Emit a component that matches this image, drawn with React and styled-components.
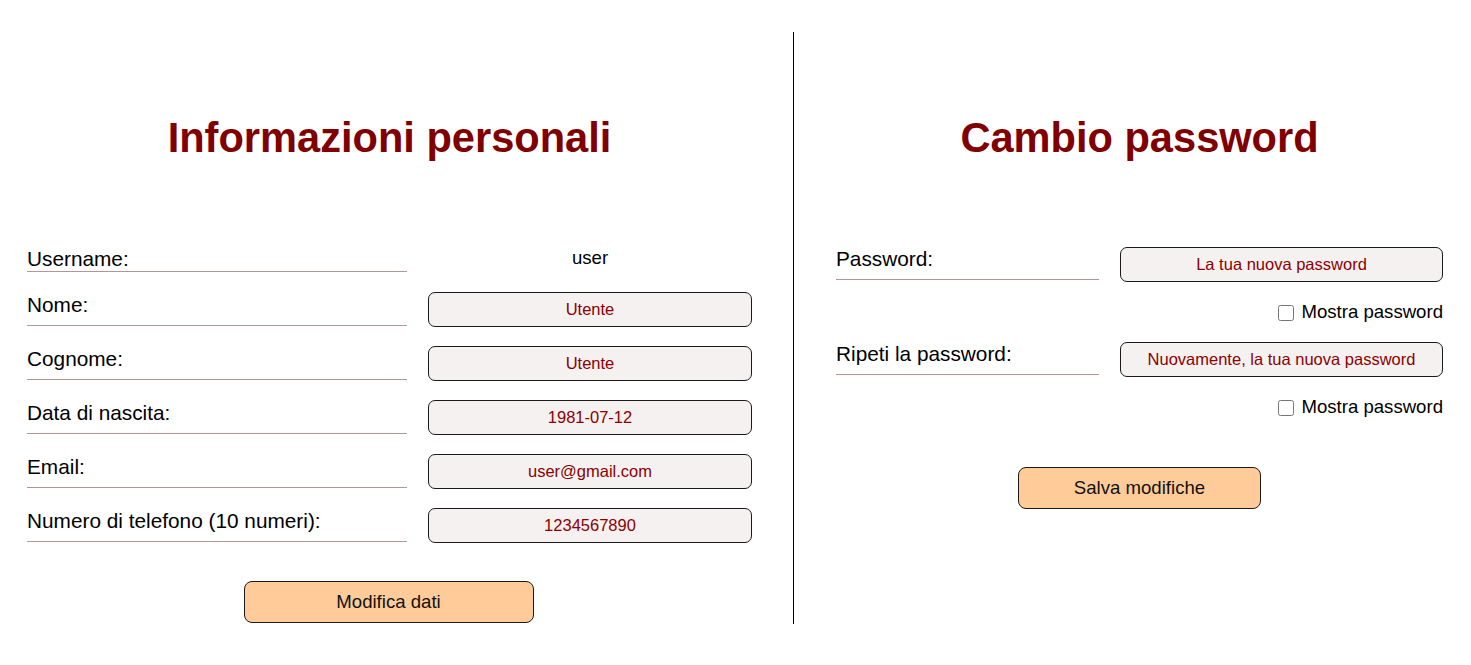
import React, { useState } from "react";
import styled, { createGlobalStyle } from "styled-components";

const GlobalStyle = createGlobalStyle`
  body {
    margin: 8px;
    background: #ffffff;
    font-family: "Liberation Sans", Arial, sans-serif;
    color: #000;
  }
`;

const Page = styled.div`
  display: flex;
  margin-top: 24px;
  height: 592px;
`;

const Section = styled.section`
  flex: ${(p) => (p.$wide ? "0 0 763px" : "1 1 auto")};
  padding: 0 ${(p) => (p.$wide ? 19 : 20)}px;
  box-sizing: border-box;
  display: flex;
  flex-direction: column;
  align-items: stretch;
`;

const Divider = styled.div`
  width: 1px;
  background: #000;
  margin: 0 22px;
  align-self: stretch;
`;

const Title = styled.h1`
  margin: 82px 0 0;
  font-size: 41.6px;
  line-height: 48px;
  font-weight: 700;
  color: #800000;
  text-align: center;
`;

const Form = styled.form`
  margin-top: ${(p) => p.$top}px;
  display: flex;
  flex-direction: column;
  gap: 19px;
`;

const Row = styled.div`
  display: grid;
  grid-template-columns: 1fr ${(p) => p.$field || 324}px;
  column-gap: 21px;
  align-items: start;
  min-height: ${(p) => p.$minHeight || 0}px;
`;

const Label = styled.label`
  font-size: 20.8px;
  line-height: 24px;
  padding-top: ${(p) => (p.$shift ? 1 : 0)}px;
  padding-bottom: ${(p) => (p.$tight ? 0 : 8)}px;
  border-bottom: 1px solid #b39696;
`;

const Value = styled.div`
  font-size: 18.6px;
  line-height: 23px;
  text-align: center;
`;

const Field = styled.input`
  box-sizing: border-box;
  width: 100%;
  height: 35px;
  margin: 0;
  padding: 0 8px;
  border: 1px solid #1a1a1a;
  border-radius: 7px;
  background: #f5f1f0;
  color: #8b0000;
  font-family: "Liberation Sans", Arial, sans-serif;
  font-size: 16.5px;
  text-align: center;
  outline: none;

  &::placeholder {
    color: #8b0000;
    opacity: 1;
  }
`;

const CheckRow = styled.label`
  display: flex;
  justify-content: flex-end;
  align-items: center;
  gap: 7px;
  font-size: 18.6px;
  line-height: 22px;
`;

const Check = styled.input`
  width: 16px;
  height: 16px;
  margin: 1px 0 0;
`;

const Button = styled.button`
  align-self: center;
  width: ${(p) => p.$width}px;
  height: 42px;
  margin-top: ${(p) => p.$top}px;
  margin-left: ${(p) => p.$left || 0}px;
  background: #ffcc99;
  border: 1px solid #1a1a1a;
  border-radius: 8px;
  color: #111;
  font-family: "Liberation Sans", Arial, sans-serif;
  font-size: 18.6px;
  cursor: pointer;
`;

const personal = [
  { label: "Nome:", value: "Utente" },
  { label: "Cognome:", value: "Utente" },
  { label: "Data di nascita:", value: "1981-07-12" },
  { label: "Email:", value: "user@gmail.com" },
  { label: "Numero di telefono (10 numeri):", value: "1234567890" },
];

const App = () => {
  const [showFirst, setShowFirst] = useState(false);
  const [showSecond, setShowSecond] = useState(false);

  return (
    <>
      <GlobalStyle />
      <Page>
        <Section $wide>
          <Title>Informazioni personali</Title>
          <Form $top={84} onSubmit={(e) => e.preventDefault()}>
            <Row $minHeight={27}>
              <Label $tight $shift>
                Username:
              </Label>
              <Value>user</Value>
            </Row>
            {personal.map((item) => (
              <Row key={item.label}>
                <Label $shift>{item.label}</Label>
                <Field defaultValue={item.value} />
              </Row>
            ))}
            <Button type="submit" $width={290} $top={19} $left={-2}>
              Modifica dati
            </Button>
          </Form>
        </Section>
        <Divider />
        <Section>
          <Title>Cambio password</Title>
          <Form $top={85} onSubmit={(e) => e.preventDefault()}>
            <Row $field={323}>
              <Label>Password:</Label>
              <Field
                type={showFirst ? "text" : "password"}
                placeholder="La tua nuova password"
              />
            </Row>
            <CheckRow>
              <Check
                type="checkbox"
                checked={showFirst}
                onChange={() => setShowFirst(!showFirst)}
              />
              Mostra password
            </CheckRow>
            <Row $field={323}>
              <Label>Ripeti la password:</Label>
              <Field
                type={showSecond ? "text" : "password"}
                placeholder="Nuovamente, la tua nuova password"
              />
            </Row>
            <CheckRow>
              <Check
                type="checkbox"
                checked={showSecond}
                onChange={() => setShowSecond(!showSecond)}
              />
              Mostra password
            </CheckRow>
            <Button type="submit" $width={243} $top={30}>
              Salva modifiche
            </Button>
          </Form>
        </Section>
      </Page>
    </>
  );
};

export default App;
